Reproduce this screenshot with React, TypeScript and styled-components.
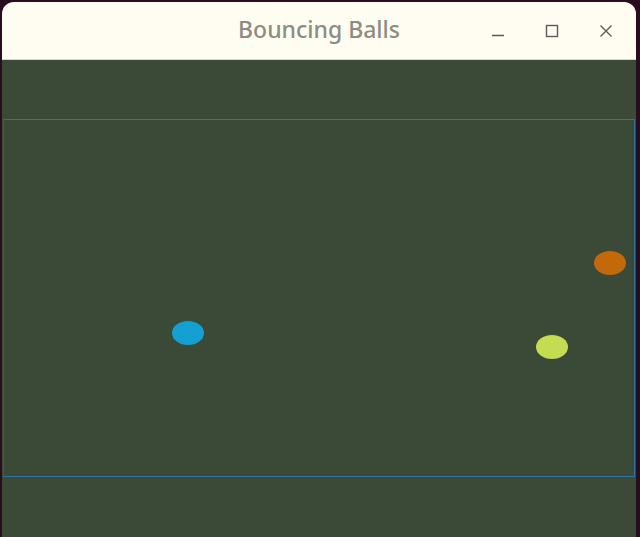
import React from 'react';
import styled, { createGlobalStyle } from 'styled-components';

const GlobalStyle = createGlobalStyle`
  html, body {
    margin: 0;
    padding: 0;
    background: #2a0c1f;
    width: 640px;
    height: 537px;
    overflow: hidden;
  }
`;

interface Ball {
  x: number;
  y: number;
  color: string;
}

// centres, relative to the inside of the field
const balls: Ball[] = [
  { x: 184, y: 213, color: '#14a0d2' },
  { x: 606, y: 143, color: '#c2690c' },
  { x: 548, y: 227, color: '#c4dc52' },
];

const App: React.FC = () => {
  return (
    <>
      <GlobalStyle />
      <Desktop>
        <Window>
          <TitleBar>
            <span />
            <Title>Bouncing Balls</Title>
            <Controls>
              <ControlButton aria-label="minimize">
                <svg width="14" height="14" viewBox="0 0 14 14">
                  <path d="M1 11.5h12" stroke="#5a5a5a" strokeWidth="1.4" />
                </svg>
              </ControlButton>
              <ControlButton aria-label="maximize">
                <svg width="14" height="14" viewBox="0 0 14 14">
                  <rect x="1.5" y="1.5" width="11" height="11" fill="none" stroke="#5a5a5a" strokeWidth="1.4" />
                </svg>
              </ControlButton>
              <ControlButton aria-label="close">
                <svg width="14" height="14" viewBox="0 0 14 14">
                  <path d="M1.5 1.5l11 11M12.5 1.5l-11 11" stroke="#5a5a5a" strokeWidth="1.4" />
                </svg>
              </ControlButton>
            </Controls>
          </TitleBar>
          <Canvas>
            <Field>
              {balls.map((b, i) => (
                <BallDot key={i} $color={b.color} style={{ left: b.x - 16, top: b.y - 12 }} />
              ))}
            </Field>
          </Canvas>
        </Window>
      </Desktop>
    </>
  );
};

const Desktop = styled.div`
  width: 640px;
  height: 537px;
  padding: 2px 4px 0 2px;
  box-sizing: border-box;
  display: flex;
`;

const Window = styled.div`
  flex: 1;
  display: flex;
  flex-direction: column;
  border-radius: 12px 12px 0 0;
  overflow: hidden;
  background: #3b4a37;
`;

const TitleBar = styled.div`
  height: 57px;
  flex-shrink: 0;
  background: #fffdf1;
  display: grid;
  grid-template-columns: 1fr auto 1fr;
  align-items: center;
  border-bottom: 1px solid #d8d6cc;
`;

const Title = styled.div`
  font-family: 'Noto Sans', sans-serif;
  font-weight: 500;
  font-size: 23px;
  color: #8d8c84;
  padding-bottom: 3px;
`;

const Controls = styled.div`
  display: flex;
  justify-content: flex-end;
  align-items: center;
  gap: 32px;
  padding-right: 19px;
  padding-top: 1px;
`;

const ControlButton = styled.div`
  width: 22px;
  height: 22px;
  display: flex;
  align-items: center;
  justify-content: center;
`;

const Canvas = styled.div`
  flex: 1;
  padding: 59px 1px 0 1px;
  background: #3b4a37;
`;

const Field = styled.div`
  position: relative;
  height: 356px;
  border: 1px solid #2c74a6;
  border-left-color: #34596a;
`;

const BallDot = styled.div<{ $color: string }>`
  position: absolute;
  width: 32px;
  height: 24px;
  border-radius: 50%;
  background: ${p => p.$color};
`;

export default App;
